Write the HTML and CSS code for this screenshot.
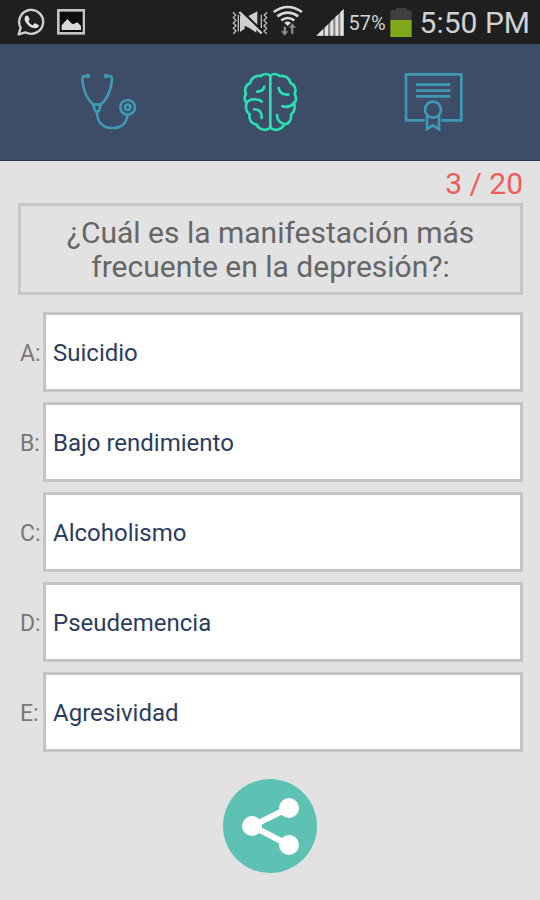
FILE: index.html
```html
<!DOCTYPE html>
<html lang="es">
<head>
  <meta charset="UTF-8">
  <meta name="viewport" content="width=device-width, initial-scale=1">
  <title>Pregunta 3</title>
  <link rel="stylesheet" href="styles.css">
</head>
<body>

  <!-- Status bar -->
  <div class="status-bar">
    <div class="status-group notifications">
      <svg class="status-icon" width="28" height="44" viewBox="52 0 84 132" aria-hidden="true">
        <path d="M57 103 L63 83 A36 36 0 1 1 77 97 Z" fill="none" stroke="#d0d0d0" stroke-width="7" stroke-linejoin="round"/>
        <path d="M76 50 q5 -6 10 -1 l4 9 q0 3 -4 6 q4 8 13 12 l6 -6 q3 -1 5 1 l8 5 q-2 9 -12 9 q-22 -3 -31 -24 q-1 -6 1 -11 z" fill="#e0e0e0"/>
      </svg>
      <svg class="status-icon" width="28" height="44" viewBox="171 0 84 132" aria-hidden="true">
        <rect x="175" y="31" width="77" height="69" fill="#0c0c0c" stroke="#c4c4c4" stroke-width="8"/>
        <path d="M185 90 V76 L202 57 L213 69 L219 73 L232 67 L243 78 V90 Z" fill="#d8d8d8"/>
      </svg>
    </div>
    <div class="status-group">
      <svg class="status-icon" width="36" height="44" viewBox="36 0 108 132" aria-hidden="true">
        <path d="M60 46 H72 L109 86 V98 L88 84 L74 77 V86 L60 96 Z M84 49 L112 34 V78 Z" fill="#cfcfcf"/>
        <path d="M64 34 L130 98" stroke="#1f1f1f" stroke-width="9"/>
        <path d="M58 36 L125 100" stroke="#d4d4d4" stroke-width="7"/>
        <path d="M39 37 l8 8 l-7 8 l8 8 l-8 8 l8 8 l-8 8 l8 8 l-8 8 M55 44 V94 M141 37 l-8 8 l7 8 l-8 8 l8 8 l-8 8 l8 8 l-8 8 l8 8 M124 44 V84" fill="none" stroke="#bdbdbd" stroke-width="4"/>
      </svg>
      <svg class="status-icon" width="32" height="44" viewBox="162 0 96 132" aria-hidden="true">
        <g fill="none" stroke="#d8d8d8" stroke-width="8">
          <path d="M167 36 Q209 6 252 36"/>
          <path d="M178 49 Q209 27 241 49"/>
          <path d="M190 61 Q209 47 229 61"/>
        </g>
        <path d="M199 68 Q209 61 219 68 L209 78 Z" fill="#e0e0e0"/>
        <path d="M197 80 h7 v14 h7 l-11 13 l-11 -13 h8 z M219 101 h7 v-18 h8 l-11 -13 l-11 13 h7 z" fill="#8c8c8c"/>
      </svg>
      <svg class="status-icon signal" width="28" height="44" viewBox="288 0 84 132" aria-hidden="true">
        <path d="M289 107 L371 27 V107 Z" fill="#858585"/>
        <path d="M289 107 L309 88 V107 Z M315 82 L324 73 V107 H315 Z M331 66 L340 57 V107 H331 Z M346 51 L355 43 V107 H346 Z M361 37 L371 27 V107 H361 Z" fill="#e2e2e2"/>
      </svg>
      <span class="battery-level">57%</span>
      <svg class="status-icon" width="22" height="44" viewBox="506 0 66 132" aria-hidden="true">
        <path d="M507 35 Q507 30 513 30 H523 V24 H556 V30 H565 Q571 30 571 35 V60 H507 Z" fill="#404040"/>
        <rect x="507" y="60" width="64" height="51" fill="#7fa81b"/>
      </svg>
      <span class="clock">5:50 PM</span>
    </div>
  </div>

  <!-- Sections -->
  <nav class="tabs">
    <a href="#casos" class="tab" aria-label="Casos">
      <svg width="80" height="80" viewBox="-6 5 240 240" aria-hidden="true">
        <g fill="none" stroke="currentColor" stroke-width="8" stroke-linecap="round" stroke-linejoin="round">
          <path d="M53 47 H44 Q36 48 37 59 C40 90 51 116 69 132 H93 C111 116 123 88 126 59 Q127 48 118 47 H109"/>
          <path d="M69 132 L75 151 Q81 156 87 151 L93 132 Z"/>
          <path d="M81 154 C80 184 98 203 127 203 C156 203 170 187 172 165"/>
          <circle cx="173" cy="141" r="22"/>
          <circle cx="173" cy="141" r="8"/>
        </g>
        <circle cx="54" cy="47" r="7" fill="currentColor"/>
        <circle cx="108" cy="47" r="7" fill="currentColor"/>
      </svg>
    </a>
    <a href="#preguntas" class="tab active" aria-label="Preguntas" aria-current="page">
      <svg width="80" height="80" viewBox="0 5 240 240" aria-hidden="true">
        <g fill="none" stroke="currentColor" stroke-width="8" stroke-linecap="round" stroke-linejoin="round">
          <path d="M121 46 V201"/>
          <path d="M121 46 C112 40 100 40 93 47 C77 44 64 53 61 67 C47 73 42 88 48 101 C42 111 44 122 50 129 C45 142 49 156 59 162 C56 178 65 191 79 192 C86 207 110 215 121 201"/>
          <path d="M121 46 C130 40 142 40 149 47 C165 44 178 53 181 67 C195 73 200 88 194 101 C200 111 198 122 192 129 C197 142 193 156 183 162 C186 178 177 191 163 192 C156 207 132 215 121 201"/>
          <path d="M82 94 Q99 94 103 79"/>
          <path d="M50 126 C59 115 84 113 95 124"/>
          <path d="M72 147 C88 145 96 156 95 173"/>
          <path d="M146 83 C149 98 160 104 175 103"/>
          <path d="M192 127 C187 138 170 142 157 138"/>
          <path d="M141 164 C141 179 151 189 163 191"/>
        </g>
      </svg>
    </a>
    <a href="#diploma" class="tab" aria-label="Diploma">
      <svg width="80" height="80" viewBox="6 5 240 240" aria-hidden="true">
        <g fill="none" stroke="currentColor" stroke-width="8">
          <path d="M104 180 H48 V42 H214 V180 H154"/>
          <path d="M78 73 H181 M78 91 H181 M78 108 H181"/>
          <circle cx="129" cy="148" r="24"/>
          <path d="M111 166 V206 L129 195 L147 206 V166"/>
        </g>
      </svg>
    </a>
  </nav>

  <main class="quiz">
    <p class="counter">3 / 20</p>
    <h1 class="question">¿Cuál es la manifestación más frecuente en la depresión?:</h1>

    <div class="answers">
      <div class="answer">
        <label for="answer-a">A:</label>
        <button type="button" id="answer-a">Suicidio</button>
      </div>
      <div class="answer">
        <label for="answer-b">B:</label>
        <button type="button" id="answer-b">Bajo rendimiento</button>
      </div>
      <div class="answer">
        <label for="answer-c">C:</label>
        <button type="button" id="answer-c">Alcoholismo</button>
      </div>
      <div class="answer">
        <label for="answer-d">D:</label>
        <button type="button" id="answer-d">Pseudemencia</button>
      </div>
      <div class="answer">
        <label for="answer-e">E:</label>
        <button type="button" id="answer-e">Agresividad</button>
      </div>
    </div>
  </main>

  <button type="button" class="share-btn" aria-label="Compartir">
    <svg width="94" height="94" viewBox="0 0 94 94" aria-hidden="true">
      <path d="M66 29 L29 47 L66 66" fill="none" stroke="#fff" stroke-width="6"/>
      <circle cx="29" cy="47" r="10" fill="#fff"/>
      <circle cx="66" cy="29" r="10" fill="#fff"/>
      <circle cx="66" cy="66" r="10" fill="#fff"/>
    </svg>
  </button>

</body>
</html>
```
FILE: styles.css
```css
* {
  box-sizing: border-box;
}

body {
  margin: 0;
  min-height: 100vh;
  background: #e2e2e2;
  font-family: Roboto, "Liberation Sans", sans-serif;
  color: #666;
  display: flex;
  flex-direction: column;
}

.status-bar {
  display: flex;
  justify-content: space-between;
  height: 44px;
  padding: 0 10px 0 17px;
  background: #1f1f1f;
  color: #d2d2d2;
}

.status-group {
  display: flex;
  align-items: center;
  gap: 4px;
}

.notifications {
  gap: 12px;
}

.status-icon {
  display: block;
}

.signal {
  margin-left: 8px;
}

.battery-level {
  padding-top: 2px;
  font-size: 20px;
}

.clock {
  margin-left: 4px;
  font-size: 30px;
}

.tabs {
  display: grid;
  grid-template-columns: repeat(3, 1fr);
  height: 117px;
  padding: 0 27px;
  background: #3d4d68;
  border-bottom: 1px solid #2b3a57;
}

.tab {
  display: flex;
  align-items: center;
  justify-content: center;
  color: #4099b4;
}

.tab.active {
  color: #2be0b0;
}

.quiz {
  padding: 4px 17px 0 18px;
}

.counter {
  margin: 0;
  font-size: 30px;
  line-height: 38px;
  text-align: right;
  color: #f35a5a;
}

.question {
  margin: 0;
  padding: 10px 40px 8px;
  border: 3px solid #c6c6c6;
  font-size: 30px;
  line-height: 34px;
  font-weight: normal;
  text-align: center;
}

.answers {
  display: flex;
  flex-direction: column;
  gap: 10px;
  margin-top: 17px;
}

.answer {
  display: flex;
  align-items: center;
}

.answer label {
  width: 25px;
  padding: 2px 0 0 2px;
  font-size: 23px;
  color: #777;
}

.answer button {
  flex: 1;
  height: 80px;
  padding: 2px 7px 0;
  background: #fff;
  border: 3px solid #c4c4c4;
  font-family: inherit;
  font-size: 24px;
  color: #2c3c60;
  text-align: left;
  cursor: pointer;
}

.share-btn {
  align-self: center;
  width: 94px;
  height: 94px;
  margin: 27px 0;
  padding: 0;
  border: none;
  border-radius: 50%;
  background: #5dc1b3;
  cursor: pointer;
}

.share-btn svg {
  display: block;
}
```
